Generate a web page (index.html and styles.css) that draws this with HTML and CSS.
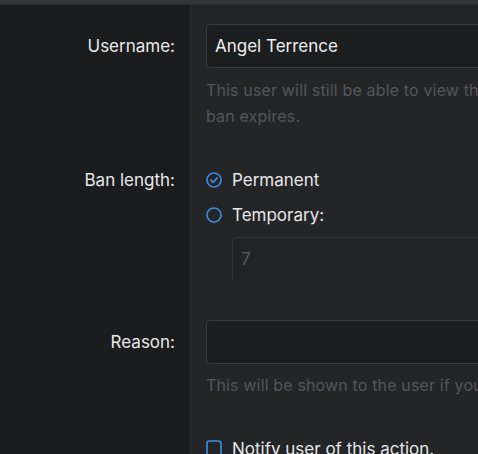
FILE: index.html
```html
<!DOCTYPE html>
<html>
<head>
<meta charset="utf-8">
<link rel="stylesheet" href="styles.css">
</head>
<body>
<div class="topbar"></div>
<form class="form">
  <div class="row">
    <div class="label label-input">Username:</div>
    <div class="field">
      <div class="input">Angel Terrence</div>
      <p class="hint">This user will still be able to view the forum, but will not be able to post until the<br>ban expires.</p>
    </div>
  </div>
  <div class="row">
    <div class="label">Ban length:</div>
    <div class="field">
      <div class="option">
        <svg class="ico" viewBox="0 0 16 16" width="16" height="16"><circle cx="8" cy="8" r="7" fill="none" stroke="#3b8fe6" stroke-width="1.6"/><path d="M4.8 8.2 L7.1 10.4 L11.2 5.9" fill="none" stroke="#3b8fe6" stroke-width="1.6" stroke-linecap="round" stroke-linejoin="round"/></svg>
        <span>Permanent</span>
      </div>
      <div class="option">
        <svg class="ico" viewBox="0 0 16 16" width="16" height="16"><circle cx="8" cy="8" r="7" fill="none" stroke="#3b8fe6" stroke-width="1.6"/></svg>
        <span>Temporary:</span>
      </div>
      <div class="input input-num">7</div>
    </div>
  </div>
  <div class="row row-reason">
    <div class="label label-input">Reason:</div>
    <div class="field">
      <div class="input"></div>
      <p class="hint">This will be shown to the user if you choose to notify them of this action.</p>
    </div>
  </div>
  <div class="row">
    <div class="label"></div>
    <div class="field">
      <div class="option">
        <svg class="ico" viewBox="0 0 16 18" width="16" height="18"><rect x="1" y="1" width="14" height="18" rx="2.5" fill="none" stroke="#3b8fe6" stroke-width="1.6"/></svg>
        <span>Notify user of this action.</span>
      </div>
    </div>
  </div>
</form>
</body>
</html>
```
FILE: styles.css
```css
html, body {
  margin: 0;
  padding: 0;
  overflow: hidden;
  background: #242527;
}
body {
  font-family: Inter, "Noto Sans", sans-serif;
  color: #e6e7e9;
  width: 478px;
  height: 454px;
}
.topbar {
  height: 5px;
  background: #343538;
  border-bottom: 1px solid #2a2b2d;
  box-sizing: border-box;
}
.form {
  display: flex;
  flex-direction: column;
  width: 900px;
}
.row {
  display: flex;
}
.label {
  width: 190px;
  flex: none;
  box-sizing: border-box;
  background: #1b1c1d;
  text-align: right;
  padding: 19px 15px 19px 0;
  font-size: 17px;
  line-height: 26px;
  color: #e8e9eb;
}
.label-input {
  padding-top: 28px;
}
.row-reason .label {
  padding-top: 29px;
}
.row-reason .field {
  padding-top: 20px;
}
.field {
  flex: 1;
  border-left: 1px solid #2b2c2e;
  padding: 19px 0 19px 15px;
  background: #242527;
  width: 640px;
}
.input {
  box-sizing: border-box;
  height: 44px;
  width: 700px;
  background: #1c1d1f;
  border: 1px solid #3a3b3e;
  border-radius: 4px;
  padding: 0 8px;
  font-size: 17px;
  line-height: 42px;
  color: #eeeff0;
}
.input-num {
  margin-left: 26px;
  margin-top: 9px;
  width: 500px;
  background: #222325;
  border-color: #35363a;
  border-bottom-color: #242527;
  color: #56585b;
  font-size: 17px;
}
.hint {
  margin: 9px 0 0;
  width: 760px;
  font-size: 16px;
  line-height: 26px;
  letter-spacing: 0.15px;
  color: #53565a;
}
.row-reason .hint {
  margin-top: 8px;
}
.option {
  display: flex;
  align-items: center;
  gap: 10px;
  height: 26px;
  font-size: 17px;
  color: #e6e7e9;
}
.option + .option {
  margin-top: 9px;
}
.ico {
  flex: none;
}
```
